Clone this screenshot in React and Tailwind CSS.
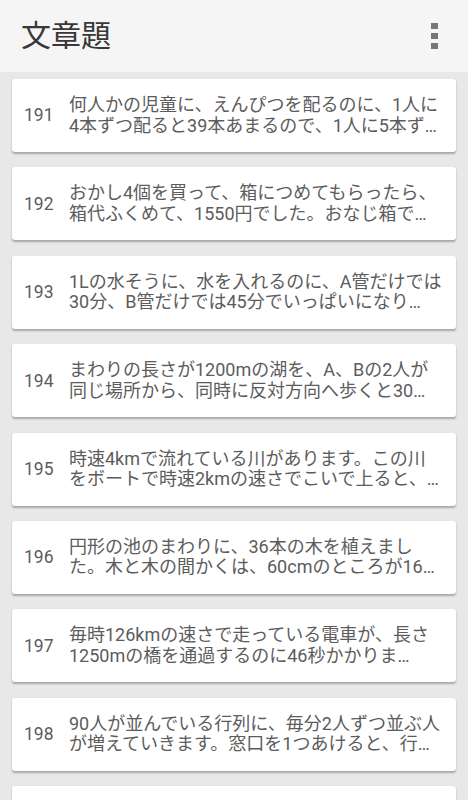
import React from 'react';

// 一覧では2行目の末尾までを表示して「…」で省略する
const problems = [
    { no: 191, text: '何人かの児童に、えんぴつを配るのに、1人に4本ずつ配ると39本あまるので、1人に5本ず…' },
    { no: 192, text: 'おかし4個を買って、箱につめてもらったら、箱代ふくめて、1550円でした。おなじ箱で…' },
    { no: 193, text: '1Lの水そうに、水を入れるのに、A管だけでは30分、B管だけでは45分でいっぱいになり…' },
    { no: 194, text: 'まわりの長さが1200mの湖を、A、Bの2人が同じ場所から、同時に反対方向へ歩くと30…' },
    { no: 195, text: '時速4kmで流れている川があります。この川をボートで時速2kmの速さでこいで上ると、…' },
    { no: 196, text: '円形の池のまわりに、36本の木を植えました。木と木の間かくは、60cmのところが16…' },
    { no: 197, text: '毎時126kmの速さで走っている電車が、長さ1250mの橋を通過するのに46秒かかりま…' },
    { no: 198, text: '90人が並んでいる行列に、毎分2人ずつ並ぶ人が増えていきます。窓口を1つあけると、行…' },
    { no: 199, text: '兄と弟の所持金の比は5:3でしたが、兄が弟に300円あげたので、2人の所持金は等し…' },
];

export default function App() {
    return (
        <div className="w-[468px] h-[800px] overflow-hidden bg-[#e8e8e8] flex flex-col" style={{ fontFamily: "Roboto, 'Noto Sans CJK JP', sans-serif" }}>
            {/* ツールバー */}
            <header className="h-[72px] shrink-0 bg-[#f5f5f5] flex items-center justify-between pl-[21px] pr-[30px]">
                <h1 className="text-[30px] text-[#383838] leading-none">文章題</h1>
                <div className="flex flex-col gap-[3.5px]">
                    <span className="w-[7px] h-[6.5px] bg-[#777]" />
                    <span className="w-[7px] h-[6.5px] bg-[#777]" />
                    <span className="w-[7px] h-[6.5px] bg-[#777]" />
                </div>
            </header>

            {/* 問題リスト */}
            <div className="flex flex-col gap-[15.4px] px-3 pt-[7px]">
                {problems.map((p) => (
                    <div key={p.no} className="h-[73px] shrink-0 bg-white rounded-[3px] shadow-[0_1.5px_2px_rgba(0,0,0,0.28)] flex items-center pl-3 pr-[14px]">
                        <span className="w-[30px] shrink-0 text-[17.5px] text-[#5c5c5c]">{p.no}</span>
                        <p className="ml-[15px] flex-1 text-[18px] leading-[20.5px] text-[#5c5c5c] line-clamp-2">{p.text}</p>
                    </div>
                ))}
            </div>
        </div>
    );
}
